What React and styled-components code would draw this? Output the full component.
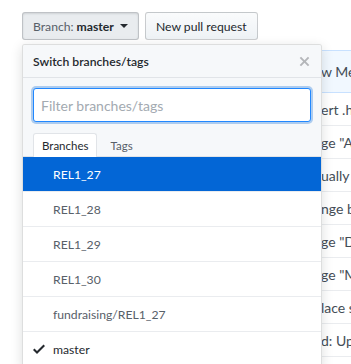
import React, { useState } from 'react';
import styled, { createGlobalStyle } from 'styled-components';

const GlobalStyle = createGlobalStyle`
  body {
    margin: 0;
    background: #fff;
    font-family: Lato, "Noto Sans", sans-serif;
    color: #24292e;
  }
`;

const Page = styled.div`
  padding: 12px 0 0 22px;
  height: 352px;
  overflow: hidden;
`;
const Toolbar = styled.div`
  position: relative;
  display: flex;
  gap: 6px;
`;
const Button = styled.button`
  height: 28px;
  padding: 0 10px;
  font-family: inherit;
  font-size: 12.2px;
  color: #24292e;
  border: 1px solid rgba(27, 31, 35, 0.2);
  border-radius: 3px;
  background: ${p => (p.$active ? '#e9ecef' : 'linear-gradient(#fafbfc, #eff3f6 90%)')};
  box-shadow: ${p => (p.$active ? 'inset 0 1px 2px rgba(27,31,35,0.12)' : 'none')};
  display: flex;
  align-items: center;
  gap: 3px;
  cursor: pointer;
`;
const Muted = styled.span`
  color: #586069;
`;
const Strong = styled.span`
  font-weight: 700;
`;
const Caret = styled.span`
  display: inline-block;
  width: 0;
  height: 0;
  margin-left: 3px;
  border-top: 4px solid #24292e;
  border-left: 4px solid transparent;
  border-right: 4px solid transparent;
`;

const Table = styled.div`
  margin-top: 10px;
  width: 360px;
  border-top: 1px solid #c8e1ff;
`;
const TableHead = styled.div`
  display: grid;
  grid-template-columns: 299px 1fr;
  height: 41px;
  align-items: center;
  background: #f1f8ff;
  border-bottom: 1px solid #c8e1ff;
  font-size: 14px;
  color: #444d56;
  white-space: nowrap;
  overflow: hidden;
`;
const TableRow = styled.div`
  display: grid;
  grid-template-columns: 299px 1fr;
  height: 32px;
  align-items: center;
  border-bottom: 1px solid #eaecef;
  font-size: 14px;
  color: #444d56;
  white-space: nowrap;
  overflow: hidden;
`;

const Menu = styled.div`
  position: absolute;
  top: 32px;
  left: 0;
  width: 298px;
  background: #fff;
  border: 1px solid rgba(27, 31, 35, 0.15);
  border-radius: 3px;
  box-shadow: 0 3px 12px rgba(27, 31, 35, 0.15);
  overflow: hidden;
`;
const MenuHeader = styled.div`
  display: flex;
  justify-content: space-between;
  align-items: center;
  height: 32px;
  padding: 0 11px 0 10px;
  background: #f6f8fa;
  border-bottom: 1px solid #e1e4e8;
`;
const MenuTitle = styled.span`
  font-size: 12.2px;
  font-weight: 600;
  color: #24292e;
`;
const CloseIcon = styled.svg`
  width: 11px;
  height: 15px;
  fill: rgba(27, 31, 35, 0.3);
`;
const Filters = styled.div`
  background: #f6f8fa;
  padding: 10px 10px 0;
  border-bottom: 1px solid #e1e4e8;
`;
const FilterInput = styled.input`
  display: block;
  box-sizing: border-box;
  width: 100%;
  height: 34px;
  padding: 0 7px;
  font-family: inherit;
  font-size: 14px;
  color: #24292e;
  background: #fff;
  border: 1px solid #2188ff;
  border-radius: 3px;
  box-shadow: 0 0 0 2px rgba(3, 102, 214, 0.3);
  outline: none;
  &::placeholder {
    color: #a3aab1;
  }
`;
const Tabs = styled.div`
  display: flex;
  gap: 4px;
  margin-top: 11px;
`;
const Tab = styled.div`
  height: 23px;
  padding: ${p => (p.$selected ? '0 7px 0 8px' : '0 8px 0 9px')};
  display: flex;
  align-items: center;
  font-size: 11.5px;
  color: ${p => (p.$selected ? '#24292e' : '#586069')};
  background: ${p => (p.$selected ? '#fff' : 'transparent')};
  border: 1px solid ${p => (p.$selected ? '#e1e4e8' : 'transparent')};
  border-bottom: none;
  border-radius: 3px 3px 0 0;
  margin-bottom: -1px;
`;
const Item = styled.div`
  display: flex;
  align-items: center;
  height: 34px;
  padding-left: 10px;
  font-size: 12.2px;
  color: ${p => (p.$active ? '#fff' : p.$current ? '#24292e' : '#586069')};
  background: ${p => (p.$active ? '#0366d6' : '#fff')};
  border-bottom: 1px solid #eaecef;
`;
const CheckSlot = styled.span`
  width: 20px;
  display: flex;
  align-items: center;
`;
const CheckIcon = styled.svg`
  width: 12px;
  height: 16px;
  fill: #24292e;
`;

const rows = [
  'ert .htaccess',
  'ge "Add',
  'ually chec',
  'nge bra',
  'ge "Disa',
  'ge "Mov',
  'lace sen',
  'd: Update',
];

const branches = ['REL1_27', 'REL1_28', 'REL1_29', 'REL1_30', 'fundraising/REL1_27', 'master'];

function App() {
  const [filter, setFilter] = useState('');

  return (
    <Page>
      <GlobalStyle />
      <Toolbar>
        <Button $active>
          <Muted>Branch:</Muted>
          <Strong>master</Strong>
          <Caret />
        </Button>
        <Button>New pull request</Button>
        <Menu>
          <MenuHeader>
            <MenuTitle>Switch branches/tags</MenuTitle>
            <CloseIcon viewBox="0 0 12 16">
              <path d="M7.48 8l3.75 3.75-1.48 1.48L6 9.48l-3.75 3.75-1.48-1.48L4.52 8 .77 4.25l1.48-1.48L6 6.52l3.75-3.75 1.48 1.48L7.48 8z" />
            </CloseIcon>
          </MenuHeader>
          <Filters>
            <FilterInput
              placeholder="Filter branches/tags"
              value={filter}
              onChange={e => setFilter(e.target.value)}
            />
            <Tabs>
              <Tab $selected>Branches</Tab>
              <Tab>Tags</Tab>
            </Tabs>
          </Filters>
          {branches.map((b, i) => (
            <Item key={b} $active={i === 0} $current={b === 'master'}>
              <CheckSlot>
                {b === 'master' && (
                  <CheckIcon viewBox="0 0 12 16">
                    <path d="M12 5l-8 8-4-4 1.5-1.5L4 10l6.5-6.5L12 5z" />
                  </CheckIcon>
                )}
              </CheckSlot>
              {b}
            </Item>
          ))}
        </Menu>
      </Toolbar>
      <Table>
        <TableHead>
          <span />
          <span>w Message</span>
        </TableHead>
        {rows.map(r => (
          <TableRow key={r}>
            <span />
            <span>{r}</span>
          </TableRow>
        ))}
      </Table>
    </Page>
  );
}

export default App;
